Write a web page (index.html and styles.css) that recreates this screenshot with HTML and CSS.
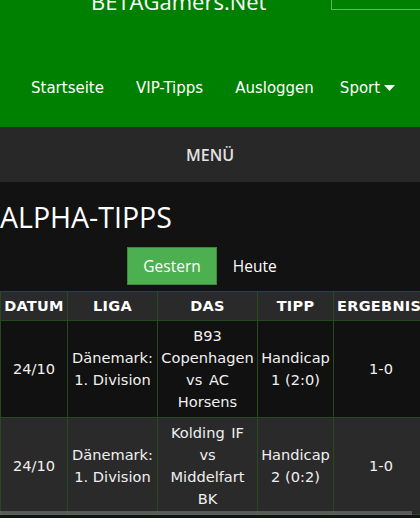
FILE: index.html
```html
<!DOCTYPE html>
<html lang="de">
<head>
<meta charset="utf-8">
<title>ALPHA-TIPPS</title>
<link rel="stylesheet" href="styles.css">
</head>
<body>
<header class="header">
  <div class="brand-row">
    <span class="brand">BETAGamers.Net</span>
    <span class="search"></span>
  </div>
  <nav class="nav">
    <a class="nav-link">Startseite</a>
    <a class="nav-link">VIP-Tipps</a>
    <a class="nav-link">Ausloggen</a>
    <a class="nav-link nav-drop">Sport <svg class="caret" width="11" height="6" viewBox="0 0 11 6"><path d="M0 0H11L5.5 6Z" fill="#fff"/></svg></a>
  </nav>
</header>
<div class="menu-bar">MENÜ</div>
<main class="main">
  <h1 class="title">ALPHA-TIPPS</h1>
  <div class="tabs">
    <span class="tab tab-active">Gestern</span>
    <span class="tab">Heute</span>
  </div>
  <div class="table-wrap">
    <table class="tips">
      <colgroup>
        <col class="c1"><col class="c2"><col class="c3"><col class="c4"><col class="c5">
      </colgroup>
      <thead>
        <tr><th>DATUM</th><th>LIGA</th><th>DAS</th><th>TIPP</th><th>ERGEBNIS</th></tr>
      </thead>
      <tbody>
        <tr class="odd"><td>24/10</td><td>Dänemark: 1. Division</td><td class="match">B93 Copenhagen vs AC Horsens</td><td>Handicap 1 (2:0)</td><td>1-0</td></tr>
        <tr class="even"><td>24/10</td><td>Dänemark: 1. Division</td><td class="match">Kolding IF vs Middelfart BK</td><td>Handicap 2 (0:2)</td><td>1-0</td></tr>
      </tbody>
    </table>
    <div class="scrollbar"></div>
  </div>
</main>
</body>
</html>
```

FILE: styles.css
```css
html, body {
  margin: 0;
  padding: 0;
  background: #121212;
  height: 518px;
  overflow: hidden;
}
body {
  font-family: "DejaVu Sans", Verdana, sans-serif;
  color: #fff;
}
.header {
  background: #008000;
  height: 127px;
}
.brand-row {
  height: 12px;
  display: flex;
  padding-left: 91px;
  overflow: hidden;
}
.brand {
  font-family: "Open Sans", sans-serif;
  font-size: 22px;
  line-height: 30px;
  margin-top: -14px;
  color: #fff;
  height: 30px;
}
.search {
  margin-left: 65px;
  flex: 1;
  height: 20px;
  margin-top: -12px;
  border: 1px solid rgba(255,255,255,0.4);
  border-right: none;
}
.nav {
  display: flex;
  gap: 32px;
  padding: 64px 0 0 31px;
  font-size: 15px;
  line-height: 24px;
}
.nav-link {
  color: #fff;
  white-space: nowrap;
  display: flex;
  align-items: center;
  gap: 4px;
}
.nav-drop {
  margin-left: -6px;
}
.caret {
  margin-top: -1px;
}
.menu-bar {
  background: #282828;
  height: 55px;
  display: flex;
  align-items: center;
  justify-content: center;
  font-family: "Open Sans", sans-serif;
  font-weight: 600;
  font-size: 16px;
  color: #e2e2e2;
}
.main {
  background: #121212;
}
.title {
  margin: 0;
  padding: 16px 0 0 0;
  font-family: "Open Sans", sans-serif;
  font-weight: 400;
  font-size: 28.5px;
  line-height: 38px;
  color: #fff;
}
.tabs {
  display: flex;
  justify-content: center;
  margin-top: 11px;
}
.tab {
  font-family: "Open Sans", sans-serif;
  font-size: 15.5px;
  line-height: 36px;
  padding: 0 15px;
  border: 1px solid transparent;
  color: #fff;
}
.tab-active {
  background: #4caf50;
  border-color: #3b8a3e;
}
.table-wrap {
  margin-top: 6px;
  width: 420px;
  overflow: hidden;
  position: relative;
}
.tips {
  border-collapse: collapse;
  table-layout: fixed;
  width: 428px;
  font-size: 14.6px;
}
.c1 { width: 67px; }
.c2 { width: 90px; }
.c3 { width: 100px; }
.c4 { width: 76px; }
.c5 { width: 95px; }
.tips th, .tips td {
  border: 1px solid #27491f;
  text-align: center;
  vertical-align: middle;
  padding: 4px 3px;
}
.tips th {
  background: #2a2a2a;
  font-size: 14.5px;
  letter-spacing: 0.3px;
  font-weight: bold;
  height: 20px;
  line-height: 20px;
  white-space: nowrap;
  overflow: hidden;
}
.tips th:last-child {
  text-align: left;
}
.tips td {
  line-height: 22px;
  color: #f0f0f0;
  height: 87px;
}
.tips td.match {
  word-spacing: 2px;
}
.odd td { background: #111; }
.even td { background: #2a2a2a; }
.scrollbar {
  position: absolute;
  left: 0;
  bottom: 0;
  width: 412px;
  height: 4px;
  background: rgba(130,130,130,0.55);
}
```
